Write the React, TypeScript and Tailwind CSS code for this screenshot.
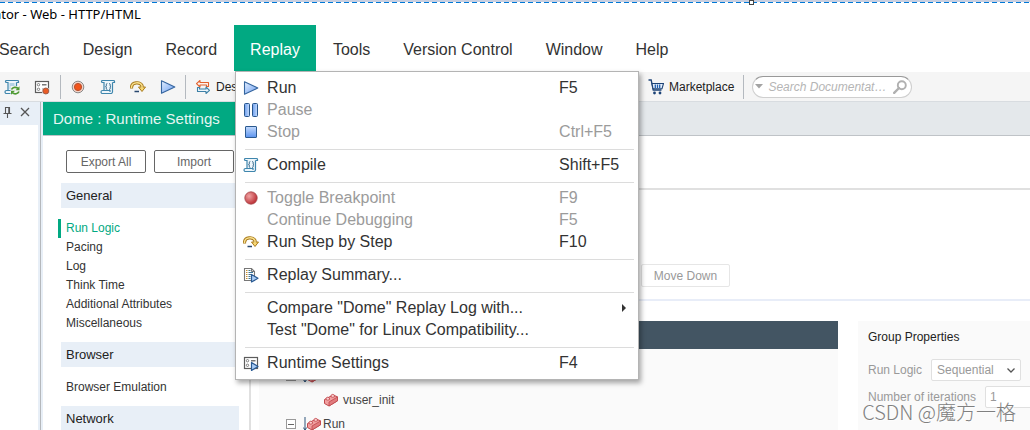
import React, { useState } from "react";

type IconProps = { className?: string };

const ScriptShape = () => (
  <>
    <path d="M4.5 1.5h9a1 1 0 0 1 1 1v1h-2v9a2 2 0 0 1-2 2h-8a1.5 1.5 0 0 1 0-3h1.5v-8a2 2 0 0 0-1.5-2z" fill="#eef6fb" />
    <path d="M12.5 3.5h2v-1a1 1 0 0 0-1-1h-11a1 1 0 0 0 0 2h1.5v8m8.500-8v8.500a2 2 0 0 1-2 2.500h-8a1.300 1.300 0 0 1 0-3h7.500v1.500" fill="none" stroke="#3f86ad" strokeWidth="1.200" />
  </>
);

const ScriptIcon = ({ className = "size-4" }: IconProps) => (
  <svg viewBox="0 0 16 16" className={className}>
    <ScriptShape />
    <path d="M7.300 4.500q-1 0-1 1.200v1.100q0 .7-.7.8.7.1.7.8v1.100q0 1 1 1M9.200 4.500q1 0 1 1.200v1.100q0 .7.7.8-.7.1-.7.8v1.100q0 1-1 1" fill="none" stroke="#2d6286" strokeWidth="1" />
  </svg>
);

const ScriptRefreshIcon = () => (
  <svg viewBox="0 0 16 16" className="size-4">
    <ScriptShape />
    <path d="M5.500 5h5M5.500 7h5M5.500 9h3" stroke="#7ab0cf" strokeWidth="1" />
    <path d="M6.500 7h9.500v9H6.500z" fill="#f5f5f5" />
    <path d="M7.500 10.500a4 3.500 0 0 1 6.500-1.200M15 12.500a4 3.500 0 0 1-6.500 1.400" fill="none" stroke="#4f9a33" strokeWidth="1.700" />
    <path d="M15.500 7.200v4h-4zM7 15.800v-4h4z" fill="#4f9a33" />
  </svg>
);

const OptionsShape = () => (
  <>
    <rect x="1.500" y="2.500" width="13" height="11" fill="#fff" stroke="#5c5c5c" strokeWidth="1.200" />
    <circle cx="4.500" cy="5.700" r="1.200" fill="none" stroke="#666" strokeWidth=".8" />
    <circle cx="4.500" cy="10.300" r="1.200" fill="none" stroke="#666" strokeWidth=".8" />
    <path d="M8 5.700h4.500M8 10.300h3" stroke="#777" strokeWidth="1.500" />
  </>
);

const OptionsRecordIcon = () => (
  <svg viewBox="0 0 16 16" className="size-4">
    <OptionsShape />
    <circle cx="11.800" cy="12" r="3.800" fill="#f5f5f5" />
    <circle cx="11.800" cy="12" r="3" fill="#ea5b25" stroke="#8b5648" strokeWidth=".8" />
  </svg>
);

const OptionsPlayIcon = () => (
  <svg viewBox="0 0 16 16" className="size-4">
    <OptionsShape />
    <path d="M8.500 7.500v8l6.500-4z" fill="#a9ccf5" stroke="#2a5b94" strokeWidth="1.200" strokeLinejoin="round" />
  </svg>
);

const RecordIcon = () => (
  <svg viewBox="0 0 16 16" className="size-4">
    <circle cx="8" cy="8" r="5.800" fill="#f3d3c8" stroke="#8a8a8a" strokeWidth="1" />
    <circle cx="8" cy="8" r="3.600" fill="#f2541b" stroke="#b8502e" strokeWidth="1" />
  </svg>
);

const StepIcon = () => (
  <svg viewBox="0 0 16 16" className="size-4">
    <path d="M1.500 9.500V8a5.500 4.500 0 0 1 10.500-1.500V8" fill="none" stroke="#a87a1c" strokeWidth="3.200" />
    <path d="M8.500 8h7L12 12.500z" fill="#f9d873" stroke="#a87a1c" strokeWidth="1" strokeLinejoin="round" />
    <path d="M1.500 9V8a5.500 4.500 0 0 1 10.500-1.500v2.500" fill="none" stroke="#fae18f" strokeWidth="1.400" />
    <path d="M4.500 12.500h4.500" stroke="#27476f" strokeWidth="1.500" />
  </svg>
);

const PlayIcon = () => (
  <svg viewBox="0 0 16 16" className="size-4">
    <defs>
      <linearGradient id="play" x1="0" y1="0" x2="1" y2="1">
        <stop offset="0" stopColor="#e3efff" />
        <stop offset="1" stopColor="#6a9df0" />
      </linearGradient>
    </defs>
    <path d="M1.500 1.800v12.400L14.800 8z" fill="url(#play)" stroke="#35659f" strokeWidth="1.100" strokeLinejoin="round" />
  </svg>
);

const PauseIcon = () => (
  <svg viewBox="0 0 16 16" className="size-4">
    <defs>
      <linearGradient id="pause" x1="0" x2="1">
        <stop offset="0" stopColor="#6d9fee" />
        <stop offset="1" stopColor="#c6dcfd" />
      </linearGradient>
    </defs>
    <rect x="1.500" y="1.500" width="5" height="13" rx="1" fill="url(#pause)" stroke="#27558d" />
    <rect x="9.500" y="1.500" width="5" height="13" rx="1" fill="url(#pause)" stroke="#27558d" />
  </svg>
);

const StopIcon = () => (
  <svg viewBox="0 0 16 16" className="size-4">
    <defs>
      <linearGradient id="stop" x1="0" y1="0" x2="0" y2="1">
        <stop offset="0" stopColor="#c3dafd" />
        <stop offset="1" stopColor="#5b93ee" />
      </linearGradient>
    </defs>
    <rect x="2.500" y="2.500" width="11" height="11" rx=".5" fill="url(#stop)" stroke="#2b598f" />
  </svg>
);

const BreakpointIcon = () => (
  <svg viewBox="0 0 16 16" className="size-4">
    <defs>
      <radialGradient id="bp" cx=".35" cy=".35" r=".7">
        <stop offset="0" stopColor="#f0a3a3" />
        <stop offset="1" stopColor="#b92a30" />
      </radialGradient>
    </defs>
    <circle cx="8" cy="8" r="6.200" fill="url(#bp)" stroke="#a5474b" strokeWidth=".8" />
  </svg>
);

const SummaryIcon = () => (
  <svg viewBox="0 0 16 16" className="size-4">
    <path d="M1.500 1.500h7l3 3v9h-10z" fill="#fff" stroke="#777" strokeWidth="1.100" />
    <path d="M8.500 1.500v3h3" fill="none" stroke="#777" />
    <path d="M3 3.500h1.500M3 5.500h1.500M3 7.500h1.500M3 9.500h1.500M3 11.500h1.500" stroke="#c98f2b" />
    <path d="M5.500 3.500h2M5.500 5.500h4.500M5.500 7.500h3M5.500 9.500h2M5.500 11.500h2" stroke="#3e7697" />
    <path d="M8.500 7.500v7.500l6.500-3.700z" fill="#a9ccf5" stroke="#2a5b94" strokeWidth="1.200" strokeLinejoin="round" />
  </svg>
);

const DesignStudioIcon = () => (
  <svg viewBox="0 0 16 16" className="size-4">
    <path d="M5 1.500v2h8.500v4h-2V6H5v2L1.500 4.700z" fill="#fff3ec" stroke="#e2622e" strokeWidth="1.100" strokeLinejoin="round" />
    <path d="M11 14.500v-2H2.500v-4h2V10H11V8l3.500 3.300z" fill="#eef6fb" stroke="#3c80a6" strokeWidth="1.100" strokeLinejoin="round" />
  </svg>
);

const CartIcon = () => (
  <svg viewBox="0 0 16 16" className="size-4">
    <path d="M.5 1h2.700l2 10h8.300" fill="none" stroke="#1d4377" strokeWidth="1.300" />
    <path d="M4 4.500h11.500L14 9.800H5z" fill="#e6effb" stroke="#1d4377" strokeWidth="1.100" />
    <path d="M7.300 5.500v3.500M9.500 5.500v3.500M11.700 5.500v3.500" stroke="#1f5fb0" strokeWidth="1.300" />
    <circle cx="6.500" cy="14" r="1.400" fill="#1d4377" />
    <circle cx="12" cy="14" r="1.400" fill="#1d4377" />
  </svg>
);

const BrickIcon = () => (
  <svg viewBox="0 0 16 16" className="size-4 shrink-0">
    <path d="M1.500 7.500L10 3l4.500 1.800v4L6 14l-4.500-2.500z" fill="#f0a0a0" stroke="#c0484c" strokeLinejoin="round" />
    <path d="M6 10l8.500-5v3.800L6 14z" fill="#e07c7e" stroke="#c0484c" strokeWidth=".8" strokeLinejoin="round" />
    <path d="M3 6q1.700-1.700 3.500 0v1.600q-1.700 1.200-3.500 0zM8 3.200q1.700-1.700 3.500 0v1.600q-1.700 1.200-3.500 0z" fill="#f9cccc" stroke="#c0484c" strokeWidth=".8" />
  </svg>
);

const menus = ["Search", "Design", "Record", "Replay", "Tools", "Version Control", "Window", "Help"];

type MenuEntry = {
  label: string;
  keys?: string;
  icon?: React.ReactNode;
  disabled?: boolean;
  submenu?: boolean;
};

const replayMenu: MenuEntry[][] = [
  [
    { label: "Run", keys: "F5", icon: <PlayIcon /> },
    { label: "Pause", icon: <PauseIcon />, disabled: true },
    { label: "Stop", keys: "Ctrl+F5", icon: <StopIcon />, disabled: true },
  ],
  [{ label: "Compile", keys: "Shift+F5", icon: <ScriptIcon /> }],
  [
    { label: "Toggle Breakpoint", keys: "F9", icon: <BreakpointIcon />, disabled: true },
    { label: "Continue Debugging", keys: "F5", disabled: true },
    { label: "Run Step by Step", keys: "F10", icon: <StepIcon /> },
  ],
  [{ label: "Replay Summary...", icon: <SummaryIcon /> }],
  [
    { label: 'Compare "Dome" Replay Log with...', submenu: true },
    { label: 'Test "Dome" for Linux Compatibility...' },
  ],
  [{ label: "Runtime Settings", keys: "F4", icon: <OptionsPlayIcon /> }],
];

const settings = [
  {
    title: "General",
    items: ["Run Logic", "Pacing", "Log", "Think Time", "Additional Attributes", "Miscellaneous"],
  },
  { title: "Browser", items: ["Browser Emulation"] },
  { title: "Network", items: [] },
];

function ReplayMenu() {
  return (
    <div role="menu" className="absolute top-[46px] left-px z-20 w-[404px] border border-[#b4b4b4] bg-white py-[5px] shadow-[2px_3px_5px_rgba(0,0,0,0.35)]">
      {replayMenu.map((group, i) => (
        <div key={i}>
          {i > 0 && <div className="mt-[6px] mr-1 mb-1 ml-[9px] h-px bg-[#dcdcdc]" />}
          {group.map((item) => (
            <button
              key={item.label}
              role="menuitem"
              disabled={item.disabled}
              className="flex h-[22px] w-full items-center pl-[7px] text-left text-[#333] disabled:text-[#9b9b9b]"
            >
              <span className="w-6 shrink-0">{item.icon}</span>
              <span className="w-[292px] shrink-0 whitespace-nowrap">{item.label}</span>
              <span className="flex-1">{item.keys}</span>
              {item.submenu && (
                <svg viewBox="0 0 4 8" className="mr-3 h-2 w-1">
                  <path d="M0 0l4 4-4 4z" fill="#333" />
                </svg>
              )}
            </button>
          ))}
        </div>
      ))}
    </div>
  );
}

const ToolSeparator = () => <div className="h-6 w-px bg-[#b4b9bf]" />;

function Toolbar() {
  return (
    <div className="flex h-[30px] items-center border-b border-[#d8dce0] bg-[#f5f5f5] text-xs text-[#222]">
      <div className="flex w-[648px] shrink-0 items-center pl-1">
        <div className="flex w-14 gap-[14px]">
          <button aria-label="Regenerate script"><ScriptRefreshIcon /></button>
          <button aria-label="Recording options"><OptionsRecordIcon /></button>
        </div>
        <ToolSeparator />
        <div className="flex w-[124px] gap-[14px] pl-[9px]">
          <button aria-label="Record"><RecordIcon /></button>
          <button aria-label="Compile"><ScriptIcon /></button>
          <button aria-label="Step"><StepIcon /></button>
          <button aria-label="Run"><PlayIcon /></button>
        </div>
        <ToolSeparator />
        <button className="flex items-center gap-[5px] pl-[9px] whitespace-nowrap">
          <DesignStudioIcon /> Design Studio
        </button>
      </div>
      <button className="flex items-center gap-[5px] pr-[9px]">
        <CartIcon /> Marketplace
      </button>
      <ToolSeparator />
      <div className="ml-2 flex h-[22px] w-40 items-center rounded-full border border-[#cfcfcf] border-t-[#999] bg-white pr-1 pl-0.5">
        <button aria-label="Search scope" className="mr-[5px]">
          <svg viewBox="0 0 8 5" className="h-[5px] w-2">
            <path d="M0 0h8L4 4.500z" fill="#a3a3a3" />
          </svg>
        </button>
        <input
          aria-label="Search documentation"
          placeholder="Search Documentat…"
          className="w-0 flex-1 bg-transparent italic outline-none placeholder:text-[#b5b5b5]"
        />
        <svg viewBox="0 0 14 14" className="size-[14px] shrink-0">
          <circle cx="8.800" cy="5.200" r="4" fill="none" stroke="#b0b0b0" strokeWidth="1.900" />
          <path d="M6 8L1.200 12.800" stroke="#b0b0b0" strokeWidth="2.400" strokeLinecap="round" />
        </svg>
      </div>
    </div>
  );
}

function SettingsNav({ current, onSelect }: { current: string; onSelect: (name: string) => void }) {
  return (
    <nav className="w-[208px] shrink-0 border-r-2 border-[#e0e0e0] pt-[14px] pr-[10px] pl-[18px] text-xs">
      <div className="mb-[10px] flex gap-2 pl-[5px] text-[#666]">
        <button className="h-[23px] w-20 shrink-0 rounded-xs border border-[#666]">Export All</button>
        <button className="h-[23px] w-20 shrink-0 rounded-xs border border-[#666]">Import</button>
      </div>
      {settings.map((section) => (
        <div key={section.title}>
          <h2 className="h-[25px] bg-[#e8eff7] pl-[5px] text-[13px] leading-[25px] text-[#222]">{section.title}</h2>
          <ul className="pt-[11px] pb-[9px]">
            {section.items.map((item) => (
              <li key={item} className="-ml-[3px] h-[19px]">
                <button
                  onClick={() => onSelect(item)}
                  className={
                    item === current
                      ? "border-l-[3px] border-[#01a982] pl-[5px] leading-[19px] text-[#01a982]"
                      : "border-l-[3px] border-transparent pl-[5px] leading-[19px] text-[#333]"
                  }
                >
                  {item}
                </button>
              </li>
            ))}
          </ul>
        </div>
      ))}
    </nav>
  );
}

const Expander = () => (
  <button aria-label="Collapse" className="flex size-[10px] items-center justify-center border border-[#999] bg-white">
    <span className="h-px w-1.5 bg-[#666]" />
  </button>
);

const RunBlockIcon = () => (
  <span className="flex items-center">
    <svg viewBox="0 0 4 14" className="-mr-px h-[14px] w-1">
      <path d="M2 0v13M.3 10.500L2 13l1.700-2.500" fill="none" stroke="#2f557a" />
    </svg>
    <BrickIcon />
  </span>
);

function GroupProperties() {
  return (
    <section className="h-full w-[172px] shrink-0 overflow-hidden bg-[#fafafa] pt-2 pl-[10px] text-[#999]">
      <h3 className="mb-[14px] leading-4 text-[#222]">Group Properties</h3>
      <div className="mb-[5px] flex items-center gap-[9px]">
        <label htmlFor="logic">Run Logic</label>
        <div className="relative">
          <select id="logic" className="h-[22px] w-[90px] appearance-none rounded-xs border border-[#e0e0e0] bg-white pl-[5px]">
            <option>Sequential</option>
            <option>Random</option>
          </select>
          <svg viewBox="0 0 8 5" className="pointer-events-none absolute top-[9px] right-[6px] h-[5px] w-2">
            <path d="M.5.5L4 4 7.500.5" fill="none" stroke="#555" strokeWidth="1.300" />
          </svg>
        </div>
      </div>
      <div className="flex items-center gap-[9px] whitespace-nowrap">
        <label htmlFor="iterations">Number of iterations</label>
        <input id="iterations" defaultValue="1" className="h-[22px] w-16 shrink-0 rounded-xs border border-[#e0e0e0] bg-white pl-1" />
      </div>
    </section>
  );
}

export default function App() {
  const [current, setCurrent] = useState("Run Logic");

  return (
    <div className="relative flex h-screen flex-col overflow-hidden bg-white font-['Liberation_Sans',Arial,sans-serif]">
      {/* selection edge along the top */}
      <div className="h-[3px] shrink-0 bg-[#c8cfe0] pt-0.5">
        <div className="h-px bg-[repeating-linear-gradient(90deg,#0078d7_0_5px,#fff_5px_8px)]" />
      </div>
      <div className="absolute top-0 left-[749px] size-[5px] border border-[#444] bg-white" />

      <div className="h-[22px] shrink-0 overflow-hidden font-['Noto_Sans',sans-serif] text-[13px] leading-[22px] text-black">
        <span className="-ml-[6px] whitespace-nowrap">ator - Web - HTTP/HTML</span>
      </div>

      <div className="-ml-[17px] flex h-[47px] shrink-0 gap-px text-base">
        {menus.map((name) => (
          <div key={name} className="relative">
            <button
              className={
                name === "Replay"
                  ? "h-[46px] bg-[#01a982] px-4 pt-[3px] text-white"
                  : "h-[46px] px-4 pt-[3px] whitespace-nowrap text-[#333]"
              }
            >
              {name}
            </button>
            {name === "Replay" && <ReplayMenu />}
          </div>
        ))}
      </div>

      <Toolbar />

      <div className="flex min-h-0 flex-1">
        <aside className="w-[38px] shrink-0">
          <div className="flex h-[23px] items-center gap-2 bg-[#e8eff7] pb-[3px] pl-[3px]">
            <button aria-label="Pin">
              <svg viewBox="0 0 9 12" className="h-3 w-[9px]">
                <path d="M2.500 7V1.500h4V7M5.800 1.500V7M.5 7.500h8M4.500 7.500V12" fill="none" stroke="#555" strokeWidth="1.100" />
              </svg>
            </button>
            <button aria-label="Close">
              <svg viewBox="0 0 10 10" className="size-[10px]">
                <path d="M1 1l8 8M9 1L1 9" stroke="#555" strokeWidth="1.300" />
              </svg>
            </button>
          </div>
        </aside>
        <div className="flex w-[5px] shrink-0 justify-center bg-[#e8eff7]">
          <div className="w-px bg-[#b5b8bc]" />
        </div>

        <main className="flex min-w-0 flex-1 flex-col">
          <div className="h-[34px] shrink-0 border-b border-[#bfc3c7] bg-[#e4e8eb]">
            <h1 className="h-full w-[260px] bg-[#01a982] pl-[10px] text-[15px] leading-[33px] text-[#e6f6f2]">
              Dome : Runtime Settings
            </h1>
          </div>
          <div className="flex min-h-0 flex-1">
            <SettingsNav current={current} onSelect={setCurrent} />
            <div className="flex min-w-0 flex-1 flex-col text-xs">
              <div className="h-[54px] shrink-0 border-b-2 border-[#e0e0e0]" />
              <div className="flex h-[111px] shrink-0 items-end border-b-2 border-[#e8edf8] pb-3 pl-[390px]">
                <button className="h-[23px] w-[89px] rounded-xs border border-[#e6e6e6] text-[#999]">Move Down</button>
              </div>
              <div className="flex min-h-0 flex-1 gap-5 pt-5 pl-2">
                <section className="flex-1 bg-[#fafafa]">
                  <div className="h-7 bg-[#435563]" />
                  <ul className="pt-[15px] text-[#444]">
                    <li className="flex h-6 items-center gap-[7px] pl-[27px]">
                      <Expander />
                      <RunBlockIcon />
                    </li>
                    <li className="flex h-6 items-center gap-1 pl-16">
                      <BrickIcon />
                      vuser_init
                    </li>
                    <li className="flex h-6 items-center gap-[7px] pl-[27px]">
                      <Expander />
                      <span className="flex items-center gap-px">
                        <RunBlockIcon />
                        Run
                      </span>
                    </li>
                  </ul>
                </section>
                <GroupProperties />
              </div>
            </div>
          </div>
        </main>
      </div>

      <div className="pointer-events-none absolute right-[14px] bottom-1 z-30 font-['Noto_Sans_CJK_SC',sans-serif] text-xl leading-7 font-light text-[#808080] [text-shadow:1px_1px_0_#ffffffb3]">
        CSDN @魔方一格
      </div>
    </div>
  );
}
